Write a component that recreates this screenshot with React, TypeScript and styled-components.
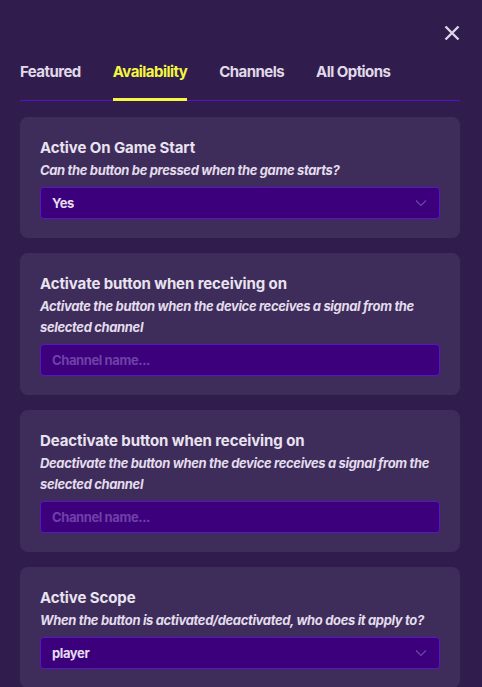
import styled, { createGlobalStyle } from "styled-components";

const GlobalStyle = createGlobalStyle`
  html, body {
    margin: 0;
    padding: 0;
    background: #301d4e;
  }
  * {
    box-sizing: border-box;
  }
`;

const Panel = styled.div`
  width: 482px;
  height: 687px;
  overflow: hidden;
  background: #301d4e;
  font-family: Inter, "Noto Sans", sans-serif;
  color: #e6dfee;
  padding: 20px 22px 0 20px;
`;

const TopBar = styled.div`
  display: flex;
  justify-content: flex-end;
  height: 25px;
`;

const CloseButton = styled.button`
  background: none;
  border: none;
  padding: 0;
  width: 16px;
  height: 25px;
  display: flex;
  align-items: center;
  justify-content: center;
  cursor: pointer;
`;

const Tabs = styled.div`
  display: flex;
  gap: 32px;
  margin-top: 14px;
  border-bottom: 1px solid #5a0fc8;
`;

const Tab = styled.div<{ $active?: boolean }>`
  font-size: 15px;
  font-weight: 700;
  letter-spacing: -0.55px;
  padding: 3px 0 17px;
  margin-bottom: -1px;
  color: ${(p) => (p.$active ? "#f6f741" : "#e0d9e8")};
  border-bottom: 3px solid ${(p) => (p.$active ? "#f6f741" : "transparent")};
`;

const Cards = styled.div`
  display: flex;
  flex-direction: column;
  gap: 15px;
  margin-top: 16px;
`;

const Card = styled.div`
  background: #3e2d5a;
  border-radius: 8px;
  padding: 22px 20px 19px;
`;

const Title = styled.div`
  font-size: 15px;
  font-weight: 700;
  letter-spacing: -0.1px;
  line-height: 18px;
  color: #e9e3f0;
`;

const Hint = styled.div`
  font-size: 13px;
  font-weight: 700;
  font-style: italic;
  letter-spacing: -0.35px;
  line-height: 21px;
  margin-top: 3px;
  color: #e3dcec;
`;

const Field = styled.div<{ $placeholder?: boolean }>`
  display: flex;
  align-items: center;
  justify-content: space-between;
  height: 32px;
  margin-top: 6px;
  padding: 0 12px 0 11px;
  background: #3c007c;
  border: 1px solid #5b14c9;
  border-radius: 4px;
  font-size: 13px;
  font-weight: 700;
  letter-spacing: -0.4px;
  color: ${(p) => (p.$placeholder ? "#7040a8" : "#e4dcef")};
`;

const Chevron = () => (
  <svg width="12" height="8" viewBox="0 0 12 8" fill="none">
    <path d="M1 1.5l5 5 5-5" stroke="#6b45a6" strokeWidth="1.2" />
  </svg>
);

const settings = [
  {
    title: "Active On Game Start",
    hint: "Can the button be pressed when the game starts?",
    value: "Yes",
    select: true,
  },
  {
    title: "Activate button when receiving on",
    hint: "Activate the button when the device receives a signal from the selected channel",
    value: "Channel name...",
    select: false,
  },
  {
    title: "Deactivate button when receiving on",
    hint: "Deactivate the button when the device receives a signal from the selected channel",
    value: "Channel name...",
    select: false,
  },
  {
    title: "Active Scope",
    hint: "When the button is activated/deactivated, who does it apply to?",
    value: "player",
    select: true,
  },
];

export default function App() {
  return (
    <>
      <GlobalStyle />
      <Panel>
        <TopBar>
          <CloseButton aria-label="Close">
            <svg width="16" height="16" viewBox="0 0 16 16">
              <path d="M1.5 1.5l13 13M14.5 1.5l-13 13" stroke="#ddd6e6" strokeWidth="2.4" />
            </svg>
          </CloseButton>
        </TopBar>
        <Tabs>
          <Tab>Featured</Tab>
          <Tab $active>Availability</Tab>
          <Tab>Channels</Tab>
          <Tab>All Options</Tab>
        </Tabs>
        <Cards>
          {settings.map((s) => (
            <Card key={s.title}>
              <Title>{s.title}</Title>
              <Hint>{s.hint}</Hint>
              <Field $placeholder={!s.select}>
                <span>{s.value}</span>
                {s.select && <Chevron />}
              </Field>
            </Card>
          ))}
        </Cards>
      </Panel>
    </>
  );
}
